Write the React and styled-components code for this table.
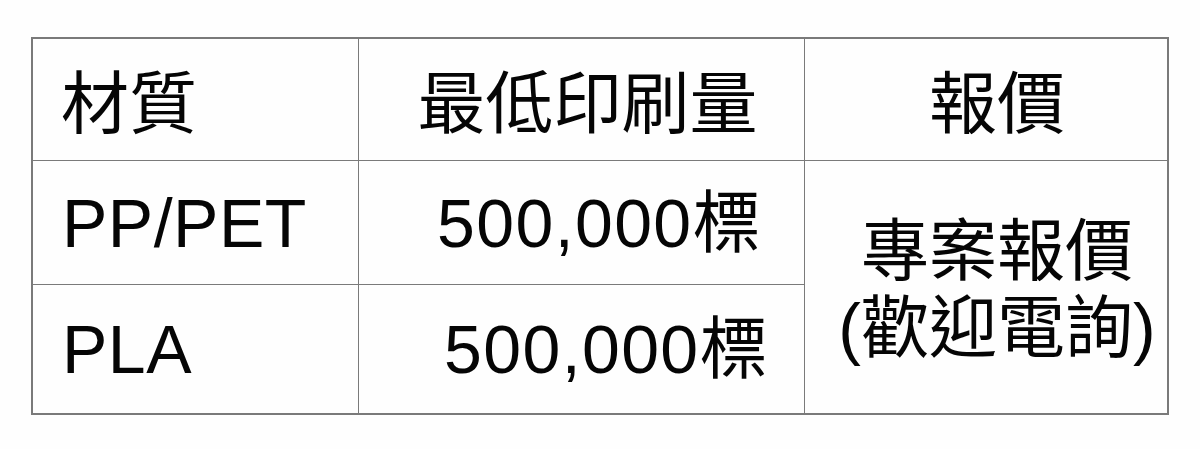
import React from "react";
import styled, { createGlobalStyle } from "styled-components";

const Global = createGlobalStyle`
  html, body { margin: 0; padding: 0; background: #ffffff; }
  body {
    font-family: "Liberation Sans", "Noto Sans CJK TC", sans-serif;
    color: #050505;
  }
`;

const Page = styled.div`
  width: 1200px;
  height: 449px;
  padding: 37px 0 0 31px;
  box-sizing: border-box;
  background: #fefefe;
`;

const Frame = styled.div`
  box-sizing: border-box;
  width: 1138px;
  height: 378px;
  border: 2px solid #7a7a7a;
  display: grid;
  grid-template-columns: 326px 446px 1fr;
  grid-template-rows: 122px 124px 1fr;
`;

const Cell = styled.div`
  box-sizing: border-box;
  display: flex;
  align-items: center;
  justify-content: ${(p) =>
    p.$align === "right" ? "flex-end" : p.$align === "center" ? "center" : "flex-start"};
  padding: ${(p) => p.$pad || "0"};
  border-right: ${(p) => (p.$last ? "none" : "1px solid #7a7a7a")};
  border-bottom: ${(p) => (p.$bottom ? "none" : "1px solid #7a7a7a")};
  grid-row: ${(p) => p.$rowSpan || "auto"};
  font-size: 68px;
  line-height: 1;
  letter-spacing: ${(p) => p.$spacing || "0"};
  white-space: nowrap;
`;

const Stack = styled.div`
  display: flex;
  flex-direction: column;
  align-items: center;
  line-height: 77px;
  margin-top: 6px;
`;

export default function App() {
  return (
    <>
      <Global />
      <Page>
        <Frame>
          <Cell $pad="8px 0 0 28px">材質</Cell>
          <Cell $align="center" $pad="8px 0 0 12px">最低印刷量</Cell>
          <Cell $align="center" $pad="8px 0 0 22px" $last>報價</Cell>

          <Cell $pad="0 0 0 29px" $spacing="0.5px">PP/PET</Cell>
          <Cell $align="right" $pad="0 42px 0 0" $spacing="1.4px">500,000標</Cell>
          <Cell $align="center" $pad="0 0 0 22px" $last $bottom $rowSpan="span 2">
            <Stack>
              <span>專案報價</span>
              <span>(歡迎電詢)</span>
            </Stack>
          </Cell>

          <Cell $pad="0 0 0 29px" $bottom $spacing="0.5px">PLA</Cell>
          <Cell $align="right" $pad="0 35px 0 0" $bottom $spacing="1.4px">500,000標</Cell>
        </Frame>
      </Page>
    </>
  );
}
